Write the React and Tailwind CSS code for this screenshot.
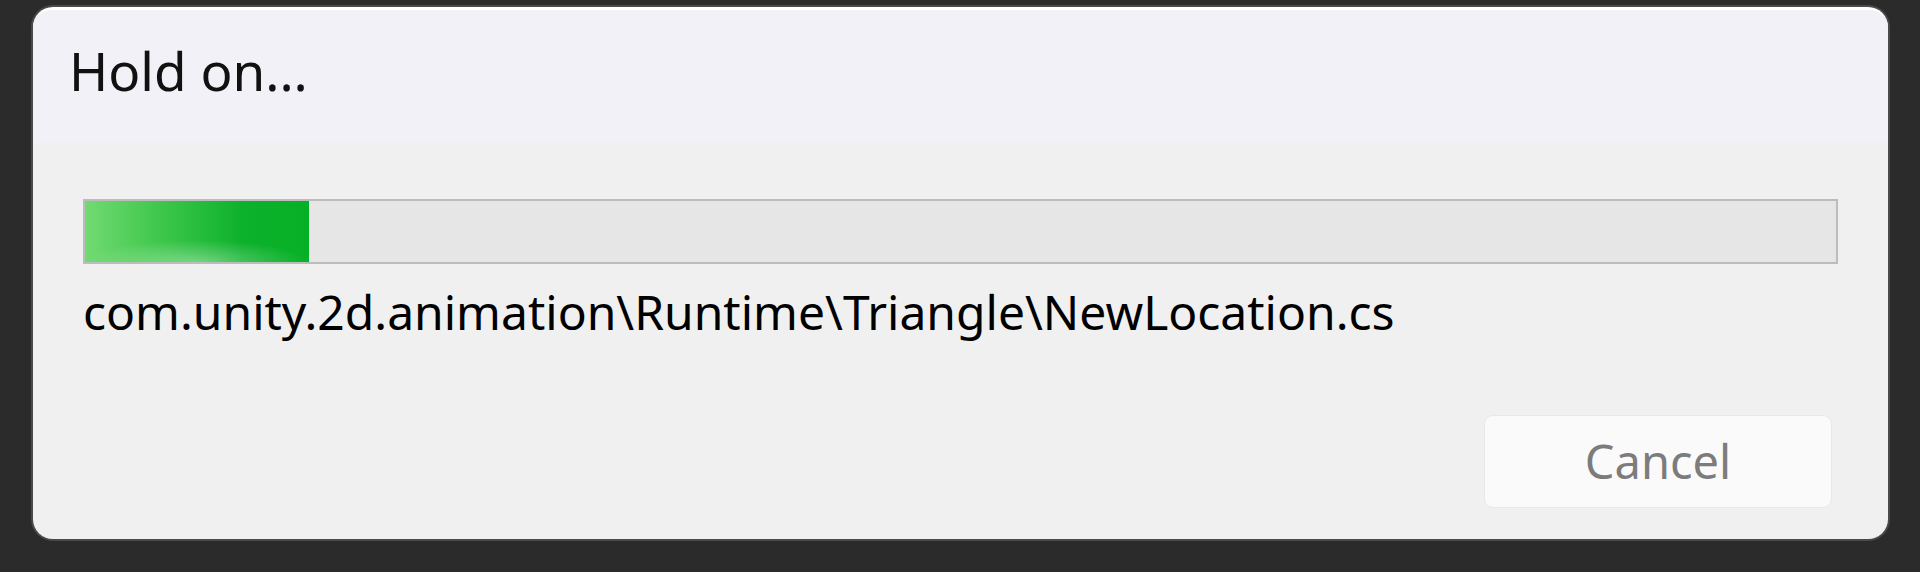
import React from 'react'

const ProgressBar = ({ percent }) => {
  return (
    <div className="h-[65px] w-full border-2 border-[#bcbcbc] bg-[#e6e6e6]">
      <div
        className="relative h-full bg-[linear-gradient(90deg,#72da72_0%,#3cc64a_35%,#0db12c_70%,#06b025_100%)]"
        style={{ width: `${percent}%` }}
      >
        <div className="absolute inset-x-0 bottom-0 h-[22px] bg-[radial-gradient(ellipse_at_50%_100%,rgba(255,255,255,0.35),rgba(255,255,255,0)_70%)]" />
      </div>
    </div>
  )
}

const App = () => {
  return (
    <div className="flex h-[572px] w-full flex-col bg-[#2b2b2b] pl-[33px] pr-[32px] pt-[7px] pb-[33px] font-['Noto_Sans',sans-serif]">
      <div className="flex flex-1 flex-col overflow-hidden rounded-[20px] border-t-[3px] border-white bg-[#f0f0f0] shadow-[0_0_0_2px_#4a4a4a]">
        <div className="flex h-[133px] items-center bg-[#f1f1f7] pb-[12px] pl-[36px]">
          <span className="text-[53px] leading-none text-[#111]">Hold on...</span>
        </div>

        <div className="flex flex-1 flex-col px-[50px] pt-[56px]">
          <ProgressBar percent={12.8} />
          <div className="mt-[18px] text-[48px] leading-[60px] text-black">
            com.unity.2d.animation\Runtime\Triangle\NewLocation.cs
          </div>

          <div className="mt-auto flex justify-end pb-[31px] pr-[6px]">
            <button
              type="button"
              disabled
              className="flex h-[93px] w-[348px] items-center justify-center rounded-[9px] border border-[#e8e8e8] bg-[#fafafa] text-[47px] text-[#7c7c7c]"
            >
              Cancel
            </button>
          </div>
        </div>
      </div>
    </div>
  )
}

export default App
